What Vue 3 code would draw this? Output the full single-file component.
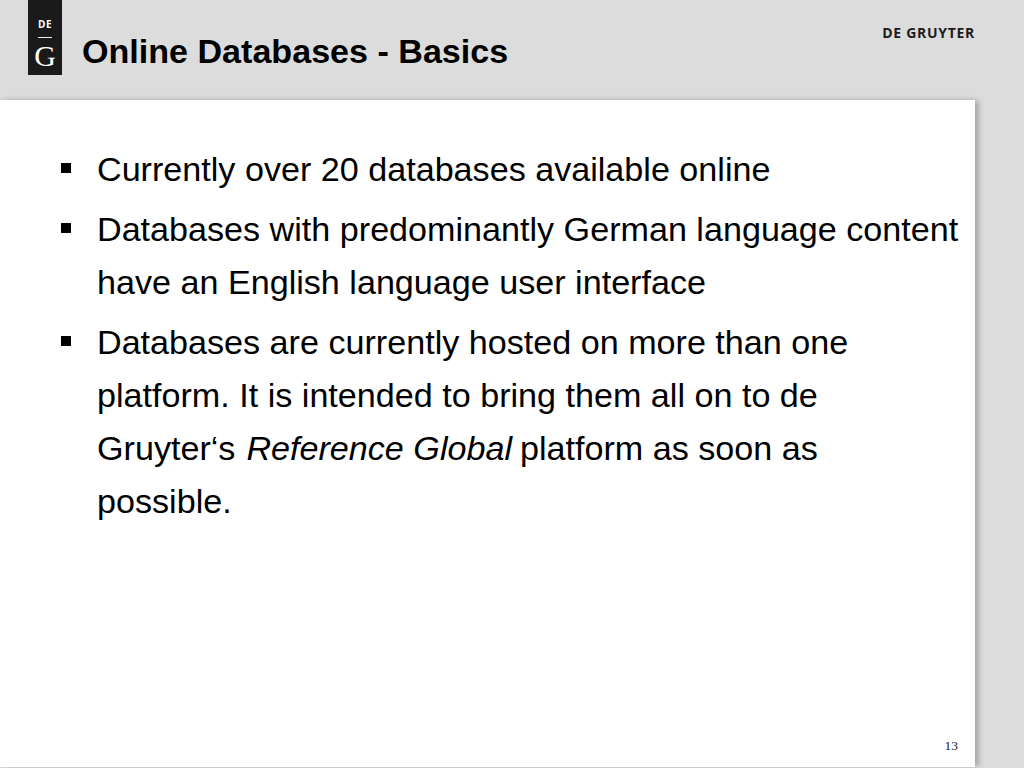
<template>
  <div class="slide">
    <header class="head">
      <div class="logo">
        <span class="de">DE</span>
        <span class="bar"></span>
        <span class="g">G</span>
      </div>
      <h1 class="title">Online Databases - Basics</h1>
      <div class="brand">DE GRUYTER</div>
    </header>
    <main class="card">
      <ul class="list">
        <li>Currently over 20 databases available online</li>
        <li>Databases with predominantly German language content have an English language user interface</li>
        <li>Databases are currently hosted on more than one platform. It is intended to bring them all on to de Gruyter‘s <em class="ref">Reference Global</em> platform as soon as possible.</li>
      </ul>
      <div class="page">13</div>
    </main>
  </div>
</template>

<script setup>
</script>

<style>
html, body { margin: 0; background: #dcdcdc; }
</style>

<style scoped>
.slide {
  width: 1024px;
  height: 768px;
  background: #dcdcdc;
  overflow: hidden;
  display: flex;
  flex-direction: column;
  font-family: "Liberation Sans", Arial, sans-serif;
  color: #000;
}
.head {
  height: 100px;
  flex: none;
  display: flex;
  align-items: flex-start;
  padding: 0 49px 0 28px;
  box-sizing: border-box;
}
.logo {
  width: 34px;
  height: 75px;
  background: #1a1a1a;
  color: #fff;
  display: flex;
  flex-direction: column;
  align-items: center;
  flex: none;
}
.de {
  font-family: "Open Sans", "Liberation Sans", sans-serif;
  font-weight: 700;
  font-size: 10px;
  letter-spacing: 0.5px;
  line-height: 10px;
  margin-top: 19px;
}
.bar {
  width: 14px;
  height: 1px;
  background: #eee;
  margin-top: 8px;
}
.g {
  font-family: "Liberation Serif", serif;
  font-size: 30px;
  line-height: 30px;
  margin-top: 3px;
}
.title {
  margin: 31px 0 0 20px;
  font-size: 34.08px;
  line-height: 40px;
  font-weight: 700;
  flex: 1;
}
.brand {
  font-family: "Open Sans", "Liberation Sans", sans-serif;
  font-weight: 700;
  font-size: 14px;
  letter-spacing: 0.7px;
  line-height: 16px;
  margin-top: 25px;
  color: #1c1c1c;
}
.card {
  width: 975px;
  height: 667px;
  flex: none;
  background: #fff;
  box-shadow: 5px 0 5px -1px #a8a8a8, 0 -2px 3px #cfcfcf;
  position: relative;
  box-sizing: border-box;
  padding: 43px 0 0 0;
}
.list {
  list-style: none;
  margin: 0;
  padding: 0 0 0 97px;
  font-size: 34.13px;
  line-height: 52.8px;
  width: 959.5px;
  box-sizing: border-box;
}
.list li {
  position: relative;
  margin-bottom: 7.4px;
}
.list li::before {
  content: "";
  position: absolute;
  left: -36px;
  top: 20px;
  width: 10px;
  height: 10px;
  background: #000;
}
.ref {
  margin-left: 1.5px;
  margin-right: -1.5px;
}
.page {
  position: absolute;
  right: 17px;
  bottom: 14px;
  font-family: "Liberation Serif", serif;
  font-size: 13.5px;
  line-height: 15px;
  color: #222;
}
</style>
